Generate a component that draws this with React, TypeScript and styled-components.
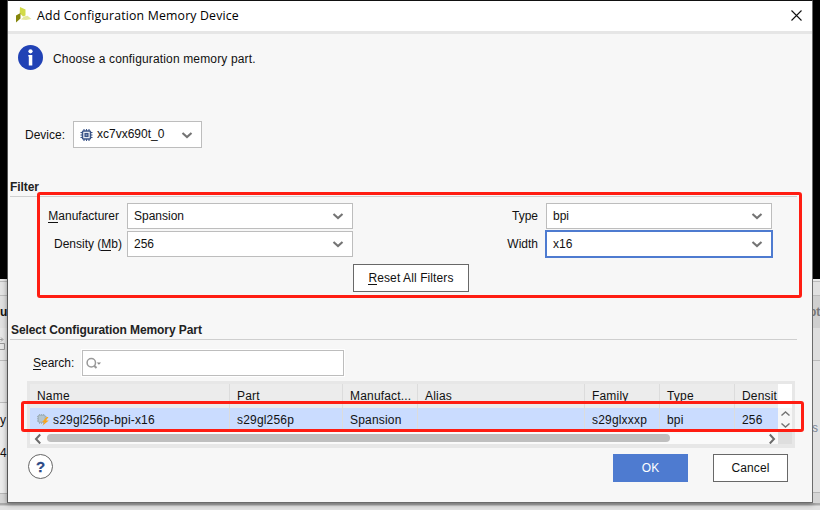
import React from "react";
import styled, { createGlobalStyle } from "styled-components";

const Global = createGlobalStyle`
  * { box-sizing: border-box; }
  body { margin: 0; overflow: hidden; font-family: "Liberation Sans", Arial, sans-serif; font-size: 12px; line-height: 14px; color: #111; }
  u { text-decoration: none; box-shadow: 0 1px 0 #111; display: inline-block; height: 13px; line-height: 14px; }
`;

const Desktop = styled.div`
  width: 820px;
  height: 510px;
  display: grid;
  grid-template-columns: 7px 806px 7px;
  background: linear-gradient(#000 0 279px, #d9d9d9 279px 503px, #aaa 503px 505px, #c8c8c8 505px 506px, #e2e2e2 506px);
`;

const Side = styled.div`
  display: flex;
  flex-direction: column;
  padding-top: 279px;
  height: 503px;
  overflow: hidden;
  white-space: nowrap;
`;

const Strip = styled.div<{ $h: number; $bg: string; $line?: string; $bold?: boolean; $color?: string; $shift?: number }>`
  height: ${(p) => p.$h}px;
  flex: none;
  display: flex;
  align-items: center;
  background: ${(p) => p.$bg};
  border-bottom: ${(p) => (p.$line ? `1px solid ${p.$line}` : "0")};
  font-weight: ${(p) => (p.$bold ? 700 : 400)};
  color: ${(p) => p.$color ?? "#111"};
  text-indent: ${(p) => p.$shift ?? 0}px;
`;

const Dialog = styled.main`
  height: 503px;
  display: flex;
  flex-direction: column;
  background: #f7f7f7;
  border: 1px solid #6b6b6b;
  border-top-color: #111;
  border-left-color: #555;
  box-shadow: 0 1px 5px rgba(0, 0, 0, 0.4);
`;

const TitleBar = styled.header`
  height: 33px;
  flex: none;
  display: flex;
  align-items: center;
  padding: 0 10px 2px 7px;
  background: #fff;
  border-bottom: 3px solid #e6e6e6;
  & > svg:last-child { margin-left: auto; }
`;

const Title = styled.h1`
  margin: 2px 0 0 5px;
  font: 400 12.3px/16px "Open Sans", "Noto Sans", sans-serif;
  letter-spacing: 0.17px;
  color: #000;
`;

const Intro = styled.div`
  display: flex;
  align-items: center;
  gap: 10px;
  height: 26px;
  margin: 10px 0 0 10px;
  & > span { padding-top: 3px; letter-spacing: 0.15px; }
`;

const DeviceRow = styled.div`
  display: flex;
  align-items: center;
  gap: 8px;
  height: 27px;
  margin: 51px 0 0 17px;
  & > span { width: 40px; }
`;

const Field = styled.div<{ $w: number; $focus?: boolean }>`
  width: ${(p) => p.$w}px;
  height: ${(p) => (p.$focus ? 28 : 26)}px;
  margin: ${(p) => (p.$focus ? "-1px" : "0")};
  display: flex;
  align-items: center;
  padding: 0 8px 0 6px;
  background: #fff;
  border: ${(p) => (p.$focus ? "2px solid #4e7bd0" : "1px solid #bdbdbd")};
  & > svg:last-child { margin-left: auto; }
`;

const DeviceField = styled(Field)`
  height: 27px;
  gap: 4px;
  & > span { margin-top: -2px; }
`;

const SectionHead = styled.h2<{ $top: number; $indent: number }>`
  height: 17px;
  margin: ${(p) => p.$top}px 15px 0 2px;
  padding-left: ${(p) => p.$indent}px;
  font-size: 12px;
  line-height: 14px;
  font-weight: 700;
  letter-spacing: -0.08px;
  color: #222;
  border-bottom: 1px solid #cfcfcf;
`;

const Filters = styled.section`
  display: grid;
  grid-template-columns: 111px 226px 177px 226px;
  grid-template-rows: 26px 26px;
  column-gap: 8px;
  row-gap: 2px;
  align-items: center;
  margin-top: 6px;
`;

const Label = styled.label<{ $overhang?: number }>`
  justify-self: end;
  margin-right: ${(p) => -(p.$overhang ?? 0)}px;
  white-space: nowrap;
`;

const Button = styled.button<{ $w: number; $primary?: boolean }>`
  width: ${(p) => p.$w}px;
  height: 28px;
  padding: 0;
  font: inherit;
  letter-spacing: 0.1px;
  color: ${(p) => (p.$primary ? "#fff" : "#111")};
  background: ${(p) => (p.$primary ? "#4e7bd0" : "#fff")};
  border: 1px solid ${(p) => (p.$primary ? "#4e7bd0" : "#686868")};
`;

const ResetRow = styled.div`
  margin: 7px 0 0 345px;
  height: 28px;
`;

const SearchRow = styled.div`
  display: flex;
  align-items: center;
  height: 26px;
  margin: 10px 0 0 25px;
`;

const SearchBox = styled.div`
  width: 262px;
  height: 26px;
  margin-left: 8px;
  padding-left: 3px;
  display: flex;
  align-items: center;
  background: #fff;
  border: 1px solid #bdbdbd;
  box-shadow: 0 0 0 1px #fff;
`;

const TablePane = styled.section`
  height: 67px;
  width: 768px;
  flex: none;
  margin: 5px 0 0 19px;
  border: 3px solid #e7e7e7;
  border-bottom-width: 4px;
  display: grid;
  grid-template-columns: 748px 14px;
`;

const Row = styled.div<{ $selected?: boolean }>`
  height: 24px;
  display: grid;
  grid-template-columns: 200px 113px 75px 167px 75px 75px 43px;
  background: ${(p) => (p.$selected ? "#cadcff" : "#ececec")};
`;

const Cell = styled.div`
  display: flex;
  align-items: center;
  padding-left: 7px;
  overflow: hidden;
  white-space: nowrap;
  border-right: 1px solid #dcdcdc;
  letter-spacing: 0.18px;
  &:last-child { border-right: 0; }
  & > svg { margin-right: 4px; flex: none; }
`;

const HScroll = styled.div`
  height: 12px;
  display: flex;
  align-items: center;
  padding: 0 2px 0 4px;
  background: #fafafa;
`;

const Thumb = styled.div`
  width: 623px;
  height: 8px;
  margin: 0 auto 0 5px;
  border-radius: 4px;
  background: #bfbfbf;
`;

const VScroll = styled.div`
  display: flex;
  flex-direction: column;
  align-items: center;
  background: linear-gradient(#fff 0 24px, #f7f7f7 24px 48px, #dedede 48px);
  padding-top: 27px;
  gap: 7px;
`;

const Footer = styled.footer`
  display: flex;
  align-items: flex-start;
  margin: 6px 24px 0 20px;
  & > button:nth-of-type(1) { margin-left: auto; margin-right: 25px; }
`;

const Help = styled.div`
  width: 25px;
  height: 25px;
  border: 1px solid #666;
  border-radius: 50%;
  background: #fff;
  color: #2c4a86;
  font-size: 15px;
  line-height: 24px;
  font-weight: 700;
  text-align: center;
  -webkit-text-stroke: 0.3px #2c4a86;
`;

const Highlight = styled.div<{ $x: number; $y: number; $w: number; $h: number }>`
  position: absolute;
  left: ${(p) => p.$x}px;
  top: ${(p) => p.$y}px;
  width: ${(p) => p.$w}px;
  height: ${(p) => p.$h}px;
  border: 3px solid #ff1d12;
  border-radius: 3px;
`;

const Down = () => (
  <svg width="12" height="8" viewBox="0 0 12 8">
    <path d="M1.5 2L6 6L10.5 2" fill="none" stroke="#747474" strokeWidth="2.1" />
  </svg>
);

const Small = ({ up }: { up?: boolean }) => (
  <svg width="9" height="5" viewBox="0 0 9 5">
    <path d={up ? "M.5 4.5L4.5 1L8.5 4.5" : "M.5 .5L4.5 4L8.5 .5"} fill="none" stroke="#747474" strokeWidth="1.4" />
  </svg>
);

const Arrow = ({ left }: { left?: boolean }) => (
  <svg width="8" height="12" viewBox="0 0 8 12">
    <path d={left ? "M6.2 2.5L2 7L6.2 11.5" : "M1.8 2.5L6 7L1.8 11.5"} fill="none" stroke="#6b6b6b" strokeWidth="2" />
  </svg>
);

const Logo = () => (
  <svg width="17" height="16" viewBox="0 0 17 16">
    <path d="M5 0L10.5 2.5V8.5L8 9.5L4.7 6Z" fill="#d2db48" />
    <path d="M1 8.5L5.5 6V11.5L1 15.5Z" fill="#85860b" />
    <path d="M6 12.5L9 9.5L12.5 8.8L16.5 12L11 13Z" fill="#e4e89c" />
  </svg>
);

const Close = () => (
  <svg width="11" height="11" viewBox="0 0 11 11">
    <path d="M.5 .5L10.5 10.5M10.5 .5L.5 10.5" stroke="#111" strokeWidth="1.1" />
  </svg>
);

const Info = () => (
  <svg width="25" height="25" viewBox="0 0 25 25">
    <circle cx="12.5" cy="12.5" r="12.5" fill="#2142b5" />
    <circle cx="12.5" cy="6.3" r="2.1" fill="#fff" />
    <path d="M10.3 10H14.3V20.5H10.8V11.5H10.3Z" fill="#fff" />
  </svg>
);

const Chip = () => (
  <svg width="13" height="12" viewBox="0 0 12 12">
    <path d="M3.5 0V12M6 0V12M8.5 0V12M0 3.5H12M0 6H12M0 8.5H12" stroke="#3b5488" strokeWidth="1.1" />
    <rect x="2" y="2" width="8" height="8" rx="1" fill="#eef1f7" stroke="#3b5488" strokeWidth="1.5" />
    <rect x="4.6" y="4.6" width="2.8" height="2.8" fill="#8fa0c2" stroke="#3b5488" strokeWidth="1.3" />
  </svg>
);

const FlashPart = () => (
  <svg width="12" height="12" viewBox="0 0 12 12">
    <path d="M2.5 0V10M4.5 0V10M6.5 0V10M0 2.5H9.5M0 4.7H9.5M0 7H9.5" stroke="#a3b3bd" strokeWidth="1" />
    <rect x="1.2" y="1.2" width="7" height="7" rx="1" fill="#b5c5ce" stroke="#98aab5" />
    <path d="M9.5 3L5 8.2H7.6L5.2 12L11.8 6.6H9L11.5 3Z" fill="#f9a51c" />
  </svg>
);

const Magnifier = () => (
  <svg width="16" height="13" viewBox="0 0 16 13">
    <circle cx="5.3" cy="5.8" r="4.2" fill="none" stroke="#999" strokeWidth="1.5" />
    <path d="M8.2 8.7L10.5 11" stroke="#999" strokeWidth="2" />
    <path d="M10.8 5.5H15L12.9 7.8Z" fill="#888" />
  </svg>
);

const columns = ["Name", "Part", "Manufact...", "Alias", "Family", "Type", "Densit"];
const part = ["s29gl256p-bpi-x16", "s29gl256p", "Spansion", "", "s29glxxxp", "bpi", "256"];

export default function App() {
  return (
    <>
      <Global />
      <Desktop>
        <Side>
          <Strip $h={3} $bg="#e6e6e6" $line="#bbb" />
          <Strip $h={14} $bg="#e3e3e3" $line="#bbb" />
          <Strip $h={32} $bg="#e0e0e0" $bold>u</Strip>
          <Strip $h={33} $bg="#e6e6e6" $line="#bbb">
            <svg width="6" height="14" viewBox="0 0 6 14">
              <path d="M0 2.5H2.5M1 .5L3 2.5L1 4.5M0 6.5H4.5V12.5H0" fill="none" stroke="#999" />
            </svg>
          </Strip>
          <Strip $h={42} $bg="#e6e6e6" $line="#bbb" />
          <Strip $h={34} $bg="#ebebeb">y</Strip>
          <Strip $h={32} $bg="#ebebeb">4</Strip>
          <Strip $h={25} $bg="#ebebeb" $line="#b5b5b5" />
          <Strip $h={9} $bg="#d5d5d5" />
        </Side>
        <Dialog>
          <TitleBar>
            <Logo />
            <Title>Add Configuration Memory Device</Title>
            <Close />
          </TitleBar>
          <Intro>
            <Info />
            <span>Choose a configuration memory part.</span>
          </Intro>
          <DeviceRow>
            <span>Device:</span>
            <DeviceField $w={129}>
              <Chip />
              <span>xc7vx690t_0</span>
              <Down />
            </DeviceField>
          </DeviceRow>
          <SectionHead $top={32} $indent={0}>Filter</SectionHead>
          <Filters>
            <Label><u>M</u>anufacturer</Label>
            <Field $w={226}>Spansion<Down /></Field>
            <Label>Type</Label>
            <Field $w={226}>bpi<Down /></Field>
            <Label $overhang={3}>Density (<u>M</u>b)</Label>
            <Field $w={226}>256<Down /></Field>
            <Label>Width</Label>
            <Field $w={228} $focus>x16<Down /></Field>
          </Filters>
          <ResetRow>
            <Button $w={116}><u>R</u>eset All Filters</Button>
          </ResetRow>
          <SectionHead $top={31} $indent={1}>Select Configuration Memory Part</SectionHead>
          <SearchRow>
            <Label><u>S</u>earch:</Label>
            <SearchBox><Magnifier /></SearchBox>
          </SearchRow>
          <TablePane>
            <div>
              <Row>{columns.map((c) => <Cell key={c}>{c}</Cell>)}</Row>
              <Row $selected>
                {part.map((v, i) => <Cell key={columns[i]}>{i === 0 && <FlashPart />}{v}</Cell>)}
              </Row>
              <HScroll><Arrow left /><Thumb /><Arrow /></HScroll>
            </div>
            <VScroll><Small up /><Small /></VScroll>
          </TablePane>
          <Footer>
            <Help>?</Help>
            <Button $w={75} $primary>OK</Button>
            <Button $w={75}>Cancel</Button>
          </Footer>
        </Dialog>
        <Side>
          <Strip $h={3} $bg="#e6e6e6" $line="#bbb" />
          <Strip $h={14} $bg="#e0e0e0" $line="#bbb" />
          <Strip $h={32} $bg="#cfcfcf" $bold $color="#777" $shift={-4}>pt</Strip>
          <Strip $h={33} $bg="#dedede" $line="#bbb" />
          <Strip $h={56} $bg="#e2e2e2" />
          <Strip $h={22} $bg="#e2e2e2" $color="#7a8494" $shift={-1}>s</Strip>
          <Strip $h={54} $bg="#e2e2e2" $line="#b5b5b5" />
          <Strip $h={10} $bg="#d5d5d5" />
        </Side>
        <Highlight $x={37} $y={192} $w={765} $h={106} />
        <Highlight $x={21} $y={401} $w={783} $h={31} />
      </Desktop>
    </>
  );
}
